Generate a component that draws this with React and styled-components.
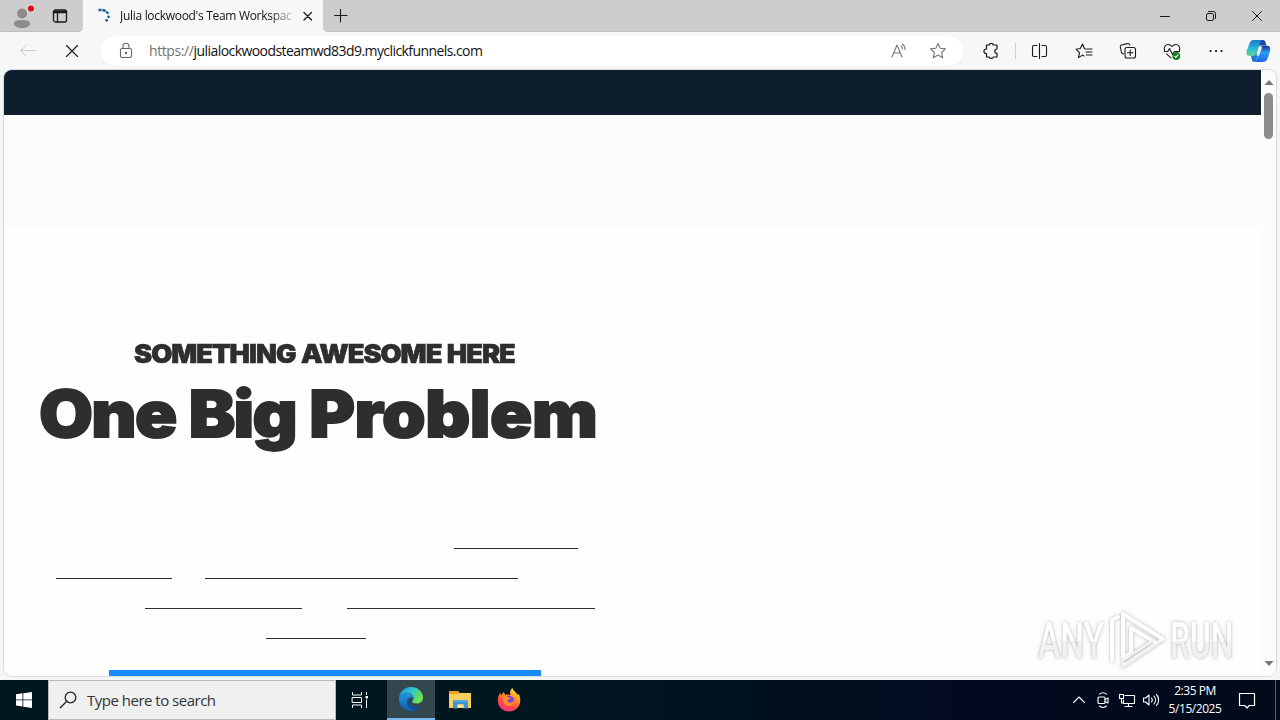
import React from "react";
import styled, { createGlobalStyle } from "styled-components";

const GlobalStyle = createGlobalStyle`
  * {
    box-sizing: border-box;
  }

  body {
    margin: 0;
    overflow: hidden;
    font-family: "Open Sans", "Noto Sans", sans-serif;
  }
`;

const Screen = styled.div`
  width: 1280px;
  height: 720px;
  display: flex;
  flex-direction: column;
  overflow: hidden;
  background: #f3f5f7;
`;

const Glyph = styled.svg`
  display: block;
  flex: none;
  overflow: visible;
  fill: none;
  stroke: ${(props) => props.$color || "#191919"};
  stroke-width: ${(props) => props.$weight || 1.1};
  stroke-linecap: round;
  stroke-linejoin: round;
`;

const Slot = styled.div`
  display: flex;
  flex: none;
  align-items: center;
  justify-content: center;
  width: ${(props) => props.$width || 44}px;
  height: 100%;
`;

/* tab strip */

const TabStrip = styled.div`
  display: flex;
  height: 32px;
  flex: none;
  background: #f7f7f7;
`;

const StripLeft = styled.div`
  display: flex;
  width: 83px;
  padding-left: 3px;
  background: #cdcdcd;
  border-bottom: 1px solid #bebebe;
  border-bottom-right-radius: 5px;
`;

const Tab = styled.div`
  display: flex;
  align-items: center;
  width: 240px;
  padding-left: 13px;
  background: #f7f7f7;
`;

const TabTitle = styled.div`
  width: 174px;
  margin-left: 8px;
  white-space: nowrap;
  font-size: 12px;
  line-height: 20px;
  letter-spacing: -0.3px;
  color: #111;
  mask-image: linear-gradient(to right, #000 150px, transparent 178px);
`;

const StripRight = styled.div`
  display: flex;
  flex: 1;
  background: #cdcdcd;
  border-bottom: 1px solid #bebebe;
  border-bottom-left-radius: 5px;
`;

const WindowButtons = styled.div`
  display: flex;
  margin-left: auto;
`;

/* address bar */

const Toolbar = styled.div`
  display: flex;
  align-items: center;
  height: 38px;
  flex: none;
  padding-left: 6px;
  background: #f7f7f7;
`;

const AddressBar = styled.div`
  display: flex;
  align-items: center;
  width: 864px;
  height: 30px;
  margin-left: 6px;
  padding-left: 6px;
  border-radius: 15px;
  background: #fff;
  box-shadow: 0 0 1px #ddd;
`;

const Url = styled.div`
  flex: 1;
  margin-left: 3px;
  white-space: nowrap;
  font-size: 14px;
  line-height: 20px;
  letter-spacing: -0.57px;
  color: #111;
`;

const Scheme = styled.span`
  letter-spacing: -0.4px;
  color: #727272;
`;

const ToolbarActions = styled.div`
  display: flex;
  align-items: center;
  height: 100%;
  margin-left: 5px;
`;

const Divider = styled.div`
  width: 1px;
  height: 16px;
  margin: 0 2px;
  background: #cfcfcf;
`;

/* page */

const Viewport = styled.div`
  display: flex;
  height: 606px;
  flex: none;
  margin: 0 4px;
  overflow: hidden;
  border-radius: 8px;
  background: #fefefe;
  box-shadow: 0 0 0 1px #d9dadc;
`;

const PageBody = styled.div`
  width: 1257px;
  display: flex;
  flex-direction: column;
`;

const TopBanner = styled.div`
  height: 45px;
  flex: none;
  background: #0e1e2e;
`;

const LogoBand = styled.div`
  height: 112px;
  flex: none;
  background: #fcfcfc;
`;

const Hero = styled.div`
  display: flex;
  flex-direction: column;
  align-items: flex-start;
  padding-top: 107px;
`;

const Kicker = styled.div`
  height: 40px;
  margin-left: 130px;
  white-space: nowrap;
  font-family: Inter, sans-serif;
  font-size: 25.5px;
  font-weight: 900;
  line-height: 40px;
  letter-spacing: -0.93px;
  word-spacing: 1px;
  color: #2e2e2e;
  -webkit-text-stroke: 0.6px #2e2e2e;
  transform: scaleX(1.067);
  transform-origin: left center;
`;

const Headline = styled.div`
  height: 80px;
  margin-left: 35px;
  white-space: nowrap;
  font-family: Inter, sans-serif;
  font-size: 64px;
  font-weight: 900;
  line-height: 80px;
  letter-spacing: -1.6px;
  word-spacing: 1px;
  color: #2e2e2e;
  -webkit-text-stroke: 1.8px #2e2e2e;
  transform: scaleX(1.09);
  transform-origin: left center;
`;

const HeadlineEnd = styled.span`
  letter-spacing: -0.4px;
`;

const LinkLines = styled.div`
  margin-top: 94px;
`;

const LinkRow = styled.div`
  display: flex;
  height: 30px;
  align-items: flex-start;
`;

const Underline = styled.div`
  width: ${(props) => props.$width}px;
  height: 1px;
  margin-left: ${(props) => props.$gap}px;
  background: #2e2e2e;
`;

const CallToAction = styled.div`
  width: 432px;
  height: 60px;
  flex: none;
  margin: 2px 0 0 105px;
  background: #188bf6;
`;

const ScrollBar = styled.div`
  display: flex;
  flex-direction: column;
  align-items: center;
  width: 15px;
  padding: 8px 0 7px;
  background: #fcfcfc;
`;

const ScrollThumb = styled.div`
  width: 9px;
  height: 46px;
  margin-top: 5px;
  margin-bottom: auto;
  border-radius: 5px;
  background: #8b8b8b;
`;

const Watermark = styled.div`
  position: absolute;
  left: 1038px;
  top: 607px;
  display: flex;
  align-items: center;
  width: 196px;
  height: 68px;
  filter: drop-shadow(0 0 1px rgba(0, 0, 0, 0.2))
    drop-shadow(0 0 2px rgba(0, 0, 0, 0.14));
`;

/* the glyphs are wider than their slot before they are squeezed */
const WatermarkWord = styled.div`
  flex: none;
  width: 110px;
  margin-right: ${(props) => props.$width - 110}px;
  white-space: nowrap;
  font-family: Roboto, sans-serif;
  font-size: 50px;
  font-weight: 500;
  line-height: 70px;
  color: transparent;
  background: linear-gradient(to bottom, #fff 50%, #f1f1f1 50%);
  background-clip: text;
  transform: scaleX(${(props) => props.$stretch});
  transform-origin: left center;
`;

/* taskbar */

const Taskbar = styled.div`
  display: flex;
  height: 40px;
  flex: none;
  margin-top: 4px;
  background: linear-gradient(to right, #001720 0%, #001720 42%, #020a20 75%, #020a1c 100%);
`;

const SearchBox = styled.div`
  display: flex;
  align-items: center;
  width: 288px;
  padding-left: 11px;
  border: 1px solid #b9b9b9;
  background: #f0f0f0;
`;

const SearchText = styled.div`
  margin-left: 9px;
  white-space: nowrap;
  font-size: 15px;
  letter-spacing: -0.5px;
  color: #333;
`;

const AppButton = styled(Slot)`
  width: ${(props) => props.$width || 49}px;
  background: ${(props) => (props.$active ? "#34474f" : "transparent")};
  border-bottom: ${(props) => (props.$active ? "2px solid #76b9ed" : "none")};
`;

const Tray = styled.div`
  display: flex;
  margin-left: auto;
`;

const Clock = styled.div`
  width: 64px;
  padding-top: 2px;
  text-align: center;
  white-space: nowrap;
  font-size: 12px;
  line-height: 18px;
  letter-spacing: -0.45px;
  color: #fff;
`;

const ShowDesktop = styled.div`
  width: 5px;
  margin-left: 9px;
  border-left: 1px solid #56606e;
`;

const linkRows = [
  [[450, 124]],
  [[52, 116], [33, 313]],
  [[141, 157], [45, 248]],
  [[262, 100]],
];

function Icon({ size = 20, color, weight, children }) {
  return (
    <Glyph width={size} height={size} viewBox={`0 0 ${size} ${size}`} $color={color} $weight={weight}>
      {children}
    </Glyph>
  );
}

function ProfileIcon() {
  return (
    <Icon size={24} color="none">
      <circle cx="12" cy="9.500" r="5" fill="#8f8b89" />
      <path d="M4 19.500c0-2.500 2.400-3.500 8-3.500s8 1 8 3.500c0 2.500-3 4.500-8 4.500s-8-2-8-4.500z" fill="#8f8b89" />
      <circle cx="21" cy="4.500" r="4.300" fill="#ddd" />
      <circle cx="21" cy="4.500" r="3.100" fill="#e00b1c" />
    </Icon>
  );
}

function CopilotIcon() {
  return (
    <Icon size={24} color="none">
      <defs>
        <linearGradient id="copilotLeft" x1="0" y1="0" x2="0" y2="1">
          <stop offset="0" stopColor="#1b75c4" />
          <stop offset=".5" stopColor="#22b8dc" />
          <stop offset="1" stopColor="#62d38b" />
        </linearGradient>
        <linearGradient id="copilotRight" x1="0" y1="0" x2="0" y2="1">
          <stop offset="0" stopColor="#12318c" />
          <stop offset=".4" stopColor="#2a9bf4" />
          <stop offset="1" stopColor="#2063e9" />
        </linearGradient>
      </defs>
      <path d="M14 1h3c2 0 2.500 2 3 4l.5 1.500h-6L11 8z" fill="#1b49a5" />
      <path d="M8 1h8c-1.500 1-2 3-3 6l-2 7c-.7 2-1.500 3-3.500 3H4c-4 0-4-3-3-6L3.500 4.500C4.300 2 5.500 1 8 1z" fill="url(#copilotLeft)" />
      <path d="M16.500 23H8.800c1.500-1 2-3 3-6l2-7c.7-2.200 1.500-3.200 3.500-3.200H21c3.500 0 3.700 3 2.800 6l-2.200 6.500c-1 2.500-2.200 3.700-5.100 3.700z" fill="url(#copilotRight)" />
      <path d="M6.500 17c2.500 0 3.500-1 4.200-3l1 2.500c-1 3.500-1.500 6.500-3.500 6.500-1.500 0-2-1-2.500-3l-.7-3z" fill="#147ed8" />
      <path d="M13.200 8h3l-3.200 8.500h-2.500z" fill="#f4fbff" />
    </Icon>
  );
}

function EdgeIcon() {
  return (
    <Icon size={26} color="none">
      <defs>
        <linearGradient id="edgeTop" x1="0" y1="0" x2="1" y2=".4">
          <stop offset="0" stopColor="#1893df" />
          <stop offset=".55" stopColor="#32c4cf" />
          <stop offset="1" stopColor="#6de34b" />
        </linearGradient>
        <linearGradient id="edgeBody" x1="0" y1="0" x2="0" y2="1">
          <stop offset="0" stopColor="#2793dc" />
          <stop offset="1" stopColor="#0960b7" />
        </linearGradient>
      </defs>
      <path d="M1 12C2 5 7 1 13 1c7 0 12 5 12 10.500 0 4-3 6-6.500 6-3 0-4.500-1-4.500-2s1.500-1 1.500-3.500C15.500 8.500 11 6 7 7c-3 .7-5 2.500-6 5z" fill="url(#edgeTop)" />
      <path d="M1 12c1-2.500 3.500-5 7.500-5 4.500 0 7 2.700 7 5-2-2-6-.5-6 4 0 5 5 8 9 8-1.500.7-3.500 1-5.500 1C6 25 .4 19.500 1 12z" fill="url(#edgeBody)" />
      <path d="M9.500 13c-2.500 6 2 10.500 7 10.500 3 0 5-1 7-4-1 .8-3 1.300-5 1.300-4.500 0-8-2.800-8-6 0-1 .4-1.800 1-2.500-.8.100-1.500.300-2 .7z" fill="#124f91" />
    </Icon>
  );
}

function FolderIcon() {
  return (
    <Icon size={24} color="none">
      <path d="M1 3h9l2 2h11v5H1z" fill="#e9a51f" />
      <path d="M1 6h10l1-1h11v15H1z" fill="#f8cf5f" />
      <path d="M5 12h14l1 2v6.500h-4.500v-4h-6v4H5z" fill="#3b93cf" />
      <path d="M5 12h14v2H5z" fill="#57a8d8" />
      <path d="M9.500 16.500h6V20h-6z" fill="#ffe288" />
    </Icon>
  );
}

function FirefoxIcon() {
  return (
    <Icon size={24} color="none">
      <defs>
        <linearGradient id="fox" x1=".8" y1="0" x2=".3" y2="1">
          <stop offset="0" stopColor="#fff044" />
          <stop offset=".35" stopColor="#ff9a20" />
          <stop offset=".7" stopColor="#ff4a43" />
          <stop offset="1" stopColor="#f52e83" />
        </linearGradient>
      </defs>
      <path d="M3.500 4.500c0 1.200.2 2 .7 2.700L6.800 4l1.400 3c2-.8 4-.2 5.200.2C12.500 4 13.500 1.500 15.500 0c.8 3 3.500 4.200 5.500 7l.7-1c1 2 1.600 4.400 1.600 6.500C23.300 19 18 23.500 12 23.500S.8 19 .8 12.500c0-3 1-5.700 2.700-8z" fill="url(#fox)" />
      <circle cx="12.200" cy="12.500" r="4.800" fill="#7446de" />
      <path d="M6 8.500c2-.8 4-.3 5 1l3 .3c-1 1.700-3 1.500-3.500 3.200 1.500 2.500 5 2 7-.5-.5 4-3 5.500-5.700 5.500C7.500 18 5 14 6 8.500z" fill="#ff8a28" />
    </Icon>
  );
}

function BrowserTabs() {
  return (
    <TabStrip>
      <StripLeft>
        <Slot $width={38}>
          <ProfileIcon />
        </Slot>
        <Slot $width={38}>
          <Icon size={16} weight={1.3}>
            <rect x="1.500" y="2" width="13" height="12" rx="2" />
            <path d="M2 4h12" strokeWidth="2.500" />
            <path d="M5.500 5v9" />
          </Icon>
        </Slot>
      </StripLeft>
      <Tab>
        <Icon size={16} color="none">
          <path d="M2.500.8h3v2.400h-3zM6.500.8l3.300.7-.4 2.400-3.300-.7zM10.500 2.800l2.700 2-1.400 1.800-2.400-2z" fill="#17629b" />
          <circle cx="12.600" cy="8.800" r="1.400" fill="#17629b" />
          <circle cx="10.600" cy="12.300" r="1.400" fill="#17629b" />
        </Icon>
        <TabTitle>Julia lockwood's Team Workspac</TabTitle>
        <Slot $width={27}>
          <Icon size={16} weight={1.3}>
            <path d="M4 4.500l7.500 7.500m0-7.500L4 12" />
          </Icon>
        </Slot>
      </Tab>
      <StripRight>
        <Slot $width={35}>
          <Icon size={16}>
            <path d="M7.500 1.500v12.500M1.500 7.500h12.500" />
          </Icon>
        </Slot>
        <WindowButtons>
          <Slot $width={46}>
            <Icon size={12} weight={1}><path d="M1.500 6.500h9" /></Icon>
          </Slot>
          <Slot $width={46}>
            <Icon size={12} weight={1}>
              <rect x="1.500" y="3.500" width="7" height="7" rx="1.500" />
              <path d="M3.500 1.500h5a2 2 0 0 1 2 2v5" />
            </Icon>
          </Slot>
          <Slot $width={46}>
            <Icon size={12} weight={1}><path d="M1.500 1.500l9 9m0-9l-9 9" /></Icon>
          </Slot>
        </WindowButtons>
      </StripRight>
    </TabStrip>
  );
}

function AddressToolbar() {
  return (
    <Toolbar>
      <Slot>
        <Icon color="#cbcbcb" weight={1}>
          <path d="M2.500 9.500h15M8.500 4L2.500 9.500l6 6" />
        </Icon>
      </Slot>
      <Slot>
        <Icon><path d="M4.500 4.500l11 11m0-11l-11 11" /></Icon>
      </Slot>
      <AddressBar>
        <Slot $width={40}>
          <Icon color="#666">
            <rect x="4.500" y="7.500" width="11" height="9" rx="1.500" />
            <path d="M7 7.500V5.300c0-4 6-4 6 0v2.200" />
            <circle cx="10" cy="12" r=".6" fill="#666" />
          </Icon>
        </Slot>
        <Url>
          <Scheme>https://</Scheme>julialockwoodsteamwd83d9.myclickfunnels.com
        </Url>
        <Slot $width={39}>
          <Icon color="#767676">
            <path d="M3 16L8 4l5 12M4.800 12h6.400M12 5c1 .7 1.400 1.700 1.400 3M13.500 3.200c1.800 1.200 2.600 3 2.500 5.300" />
          </Icon>
        </Slot>
        <Slot $width={40}>
          <Icon color="#767676">
            <path d="M10 2.500l2.200 4.800 5.300.6-3.900 3.600 1 5.200-4.600-2.600-4.600 2.600 1-5.200-3.900-3.600 5.300-.6z" />
          </Icon>
        </Slot>
        <Slot $width={6} />
      </AddressBar>
      <ToolbarActions>
        <Slot>
          <Icon weight={1.2}>
            <path d="M5.500 4h2.700c0-2.300 4-2.300 4 0H16v4c-3 0-3 4.300 0 4.300V16h-3.800c0 1.800-4 1.800-4 0H5.500v-3.500c-3.500 0-3.500-4.500 0-4.500z" />
          </Icon>
        </Slot>
        <Divider />
        <Slot>
          <Icon>
            <path d="M7 4.500H4A1.500 1.500 0 0 0 2.500 6v8A1.500 1.500 0 0 0 4 15.500h3M12 4.500h3A1.500 1.500 0 0 1 16.500 6v8a1.500 1.500 0 0 1-1.500 1.500h-3M9.500 2.500v15" />
          </Icon>
        </Slot>
        <Slot>
          <Icon>
            <path d="M12 8l-1.500-.3L8.500 3 6.300 7.500l-4.300.7 3.500 3.400-1 5 4-2.500 1.500.8M13 8h5M12 11h6M12.500 14h5.500" />
          </Icon>
        </Slot>
        <Slot>
          <Icon>
            <rect x="7" y="6.500" width="10.500" height="10.500" rx="2" />
            <path d="M12.200 9v5.500M9.500 11.800H15M5.500 13c-1-.2-1.600-.7-2-1.500L2.300 6c-.2-1 .2-1.700 1.200-2l6-1.400c1-.2 1.800.2 2.300 1.400" />
          </Icon>
        </Slot>
        <Slot>
          <Icon>
            <path d="M2.500 9.500C1.500 5.500 4 3.500 6 3.500c1.800 0 3 .8 4 2 1-1.200 2.200-2 4-2 2 0 4.500 2 3.500 6M2.500 10.500h3.300l1.700-3 3 6 2-3h5M4.500 12.800l4.500 4" />
            <circle cx="14.300" cy="15" r="3.900" fill="#13811b" stroke="none" />
            <path d="M12.700 15.300l1.200 1.100 2.200-2.700" stroke="#fff" />
          </Icon>
        </Slot>
        <Slot>
          <Icon>
            <path d="M4.500 10h.1M10 10h.1M15.500 10h.1" strokeWidth="2.200" />
          </Icon>
        </Slot>
        <Slot $width={40}>
          <CopilotIcon />
        </Slot>
      </ToolbarActions>
    </Toolbar>
  );
}

function FunnelPage() {
  return (
    <Viewport>
      <PageBody>
        <TopBanner />
        <LogoBand />
        <Hero>
          <Kicker>SOMETHING AWESOME HERE</Kicker>
          <Headline>
            One Big <HeadlineEnd>Problem</HeadlineEnd>
          </Headline>
          <LinkLines>
            {linkRows.map((row, index) => (
              <LinkRow key={index}>
                {row.map(([gap, width]) => (
                  <Underline key={gap} $gap={gap} $width={width} />
                ))}
              </LinkRow>
            ))}
          </LinkLines>
          <CallToAction />
        </Hero>
      </PageBody>
      <ScrollBar>
        <Icon size={10} color="none"><path d="M.5 7L5 2l4.500 5z" fill="#777" /></Icon>
        <ScrollThumb />
        <Icon size={10} color="none"><path d="M.5 2h9L5 7z" fill="#777" /></Icon>
      </ScrollBar>
    </Viewport>
  );
}

function AnyRunMark() {
  return (
    <Watermark>
      <WatermarkWord $width={70} $stretch={0.67}>ANY</WatermarkWord>
      <Glyph width="62" height="68" viewBox="0 0 62 68" $color="#fff" $weight={4}>
        <path d="M15 56v3l40-27" stroke="#f1f1f1" />
        <path d="M4 54V13l6-3" />
        <path d="M15 7v43l8-4V21l24 14" />
        <path d="M15 53l31-20" stroke="#f1f1f1" strokeWidth="3" />
        <path d="M15 7l40 25" />
      </Glyph>
      <WatermarkWord $width={64} $stretch={0.635}>RUN</WatermarkWord>
    </Watermark>
  );
}

function WindowsTaskbar() {
  return (
    <Taskbar>
      <Slot $width={48}>
        <Icon size={16} color="none">
          <path d="M0 2.300l6.500-1v6.200H0zM7.300 1.200L16 0v7.500H7.300zM0 8.300h6.500v6.200L0 13.600zM7.300 8.300H16V16l-8.700-1.200z" fill="#fff" />
        </Icon>
      </Slot>
      <SearchBox>
        <Icon size={18} color="#222" weight={1.3}>
          <circle cx="10.500" cy="6.500" r="5.300" />
          <path d="M6.500 10.500L.3 16.700" />
        </Icon>
        <SearchText>Type here to search</SearchText>
      </SearchBox>
      <AppButton $width={51}>
        <Icon size={22} color="#fff" weight={1}>
          <path d="M1.500 3.500v2.500h9V3.500M1.500 18.500V16h9v2.500M1.500 8.500h9v5h-9zM15.500 3.500v2M15.500 11v7.500" />
          <rect x="14.500" y="7" width="2.500" height="2.500" fill="#fff" stroke="none" />
        </Icon>
      </AppButton>
      <AppButton $width={48} $active>
        <EdgeIcon />
      </AppButton>
      <AppButton>
        <FolderIcon />
      </AppButton>
      <AppButton>
        <FirefoxIcon />
      </AppButton>
      <Tray>
        <Slot $width={24}>
          <Icon size={16} color="#fff"><path d="M2.500 10.500L8 5l5.500 5.500" /></Icon>
        </Slot>
        <Slot $width={24}>
          <Icon size={16} color="#fff">
            <rect x="3" y="5" width="7" height="6.500" rx="1" />
            <path d="M10 7.500L13 6v5l-3-1.500M4.500 2.200C6.500.5 9.500.5 11.500 2.200M4.500 14c2 1.700 5 1.700 7 0" />
          </Icon>
        </Slot>
        <Slot $width={24}>
          <Icon size={16} color="#fff">
            <path d="M6 3.500h9.500v8h-11V8M9.500 11.500v3M6 14.500h7M.5 2.500h4v4h-4zM2.500 6.500v4.500h2" />
          </Icon>
        </Slot>
        <Slot $width={24}>
          <Icon size={16} color="#fff">
            <path d="M.5 6h2.200L6 3v10L2.700 10H.5zM8.500 6c1 1.200 1 2.800 0 4M11 4.200c2 2.200 2 5.400 0 7.600M13.500 2.500c2.800 3 2.800 8 0 11" />
          </Icon>
        </Slot>
        <Clock>
          <div>2:35 PM</div>
          <div>5/15/2025</div>
        </Clock>
        <Slot $width={39}>
          <Icon size={18} color="#fff" weight={1.2}>
            <path d="M1.500 2.500h15v12h-5.200L9 17l-2.300-2.500H1.500z" />
          </Icon>
        </Slot>
        <ShowDesktop />
      </Tray>
    </Taskbar>
  );
}

function App() {
  return (
    <Screen>
      <GlobalStyle />
      <BrowserTabs />
      <AddressToolbar />
      <FunnelPage />
      <AnyRunMark />
      <WindowsTaskbar />
    </Screen>
  );
}

export default App;
